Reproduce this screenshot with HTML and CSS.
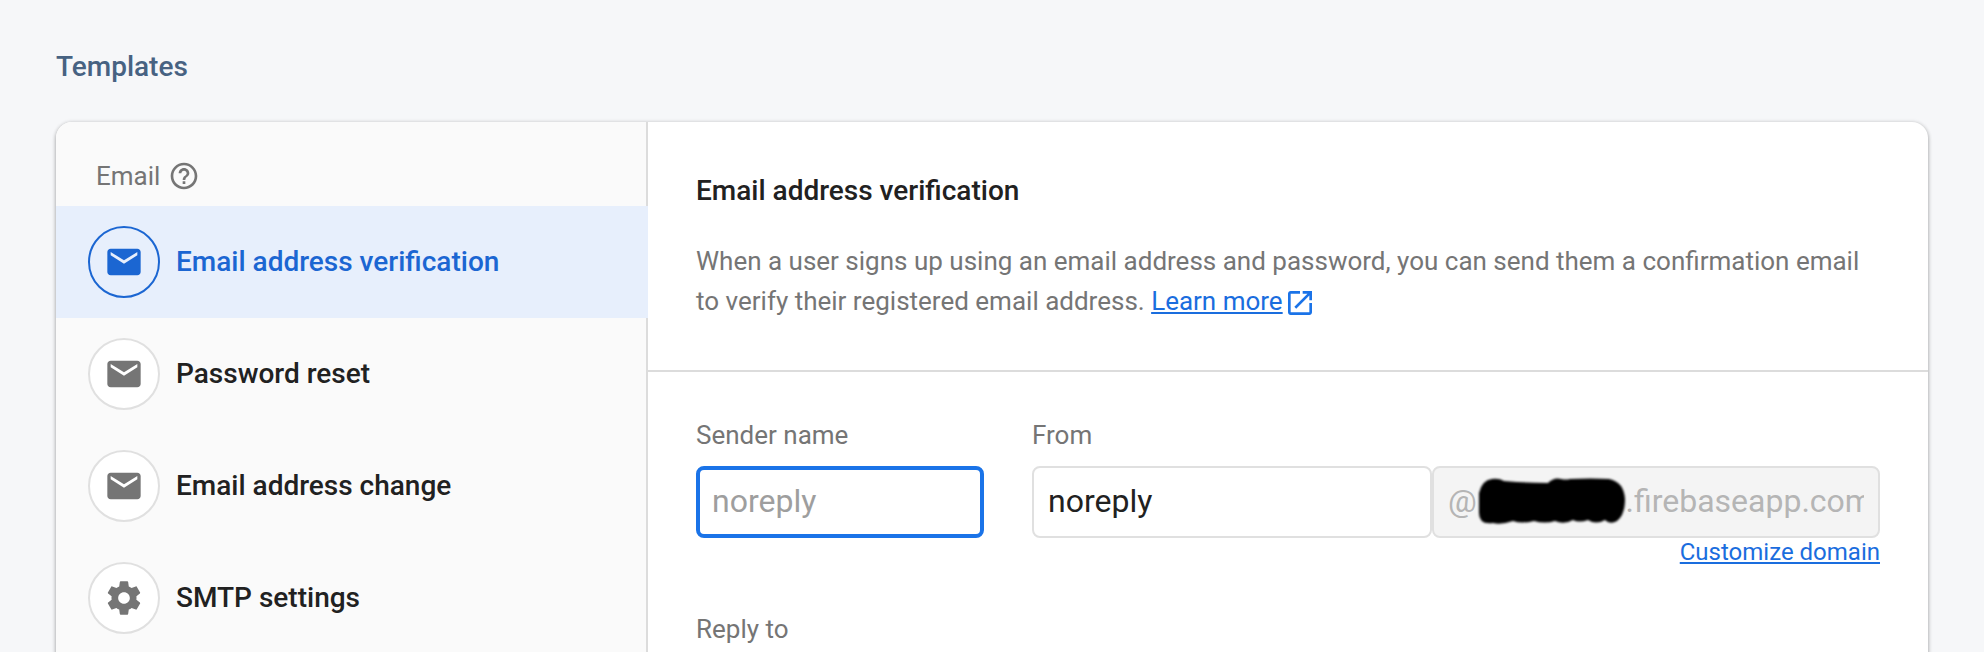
FILE: index.html
```html
<!DOCTYPE html>
<html lang="en">
<head>
<meta charset="utf-8">
<meta name="viewport" content="width=device-width, initial-scale=1">
<title>Templates</title>
<link rel="stylesheet" href="styles.css">
</head>
<body>
<svg class="sprite" aria-hidden="true">
  <symbol id="mail" viewBox="0 0 24 24"><path d="M20 4H4c-1.100 0-1.990.9-1.990 2L2 18c0 1.100.9 2 2 2h16c1.100 0 2-.9 2-2V6c0-1.100-.9-2-2-2zm0 4l-8 5-8-5V6l8 5 8-5v2z"/></symbol>
  <symbol id="gear" viewBox="0 0 24 24"><path d="M19.430 12.980c.04-.32.07-.64.07-.98s-.03-.66-.07-.98l2.110-1.650c.19-.15.24-.42.12-.64l-2-3.460c-.12-.22-.39-.3-.61-.22l-2.490 1c-.52-.4-1.080-.73-1.690-.98l-.38-2.650C14.460 2.180 14.250 2 14 2h-4c-.25 0-.46.18-.49.42l-.38 2.650c-.61.25-1.170.59-1.690.98l-2.490-1c-.23-.09-.49 0-.61.22l-2 3.460c-.13.22-.07.49.12.64l2.110 1.650c-.04.32-.07.65-.07.98s.03.66.07.98l-2.110 1.650c-.19.15-.24.42-.12.64l2 3.460c.12.22.39.3.61.22l2.490-1c.52.4 1.080.73 1.690.98l.38 2.650c.03.24.24.42.49.42h4c.25 0 .46-.18.49-.42l.38-2.650c.61-.25 1.170-.59 1.690-.98l2.490 1c.23.09.49 0 .61-.22l2-3.460c.12-.22.07-.49-.12-.64l-2.110-1.650zM12 15.500c-1.930 0-3.500-1.570-3.500-3.500s1.570-3.500 3.500-3.500 3.500 1.570 3.500 3.500-1.570 3.500-3.500 3.500z"/></symbol>
</svg>
<main class="page">
  <h1 class="page-title">Templates</h1>
  <div class="card">
    <nav class="sidebar" aria-label="Email templates">
      <div class="group">
        <span>Email</span>
        <button class="help" type="button" aria-label="Help">
          <svg class="icon-small" viewBox="0 0 24 24" aria-hidden="true"><path d="M11 18h2v-2h-2v2zm1-16C6.480 2 2 6.480 2 12s4.480 10 10 10 10-4.480 10-10S17.520 2 12 2zm0 18c-4.410 0-8-3.590-8-8s3.590-8 8-8 8 3.590 8 8-3.590 8-8 8zm0-14c-2.210 0-4 1.790-4 4h2c0-1.100.9-2 2-2s2 .9 2 2c0 2-3 1.750-3 5h2c0-2.250 3-2.500 3-5 0-2.210-1.790-4-4-4z"/></svg>
        </button>
      </div>
      <button class="item item-active" type="button" aria-current="true"><span class="badge"><svg class="icon" aria-hidden="true"><use href="#mail"/></svg></span>Email address verification</button>
      <button class="item" type="button"><span class="badge"><svg class="icon" aria-hidden="true"><use href="#mail"/></svg></span>Password reset</button>
      <button class="item" type="button"><span class="badge"><svg class="icon" aria-hidden="true"><use href="#mail"/></svg></span>Email address change</button>
      <button class="item" type="button"><span class="badge"><svg class="icon" aria-hidden="true"><use href="#gear"/></svg></span>SMTP settings</button>
    </nav>
    <section class="detail">
      <header class="intro">
        <h2 class="intro-title">Email address verification</h2>
        <p class="intro-text">When a user signs up using an email address and password, you can send them a confirmation email to verify their registered email address. <a class="link" href="#learn">Learn more</a><svg class="icon-small external" viewBox="0 0 24 24" aria-hidden="true"><path d="M19 19H5V5h7V3H5c-1.110 0-2 .9-2 2v14c0 1.100.89 2 2 2h14c1.100 0 2-.9 2-2v-7h-2v7zM14 3v2h3.590l-9.830 9.830 1.410 1.410L19 6.410V10h2V3h-7z"/></svg></p>
      </header>
      <form class="form">
        <div class="field">
          <label class="label" for="sender">Sender name</label>
          <input class="input input-focused" id="sender" type="text" placeholder="noreply">
        </div>
        <div class="field">
          <label class="label" for="from">From</label>
          <div class="address">
            <input class="input" id="from" type="text" value="noreply">
            <div class="domain">
              <input class="input" type="text" aria-label="Domain" disabled value="@&nbsp;&nbsp;&nbsp;&nbsp;&nbsp;&nbsp;&nbsp;&nbsp;&nbsp;&nbsp;&nbsp;&nbsp;&nbsp;&nbsp;&nbsp;&nbsp;&emsp13;&emsp13;.firebaseapp.com">
              <svg class="scribble" viewBox="0 0 152 52" aria-hidden="true"><path d="M4 18Q7 5 17 4Q24 3 29 6Q52 8 73 8Q79 2 86 4Q91 5 95 4Q116 3 134 4Q149 7 150 24Q150 40 142 46Q135 50 130 45Q121 50 113 45Q104 48 98 45Q89 50 80 46Q70 49 59 46Q47 49 38 46Q26 50 18 48Q4 50 4 38Z"/></svg>
            </div>
          </div>
          <a class="link customize" href="#domain">Customize domain</a>
        </div>
        <div class="field reply">
          <span class="label">Reply to</span>
        </div>
      </form>
    </section>
  </div>
</main>
</body>
</html>
```
FILE: styles.css
```css
* {
  box-sizing: border-box;
}

body {
  margin: 0;
  background: #f6f7f9;
  color: #212121;
  font-family: Roboto, "Liberation Sans", sans-serif;
  font-size: 26px;
  line-height: 40px;
}

button {
  padding: 0;
  border: 0;
  background: none;
  color: inherit;
  font: inherit;
  text-align: left;
}

svg {
  fill: currentColor;
}

.sprite {
  display: none;
}

.page {
  display: flex;
  flex-direction: column;
  height: 100vh;
  padding: 47px 56px 0;
  overflow: hidden;
}

.page-title {
  margin: 0 0 35px;
  color: #476282;
  font-size: 28px;
  font-weight: 500;
}

.card {
  display: flex;
  flex: 1 0 auto;
  border-radius: 16px 16px 0 0;
  background: #fff;
  box-shadow: 0 2px 4px rgba(0, 0, 0, 0.3), 0 0 4px rgba(0, 0, 0, 0.12);
}

.sidebar {
  display: flex;
  flex: 0 0 592px;
  flex-direction: column;
  border-radius: 16px 0 0 0;
  background: linear-gradient(to left, #dcdcdc 2px, #fafafa 2px);
}

.group {
  display: flex;
  align-items: center;
  gap: 8px;
  height: 84px;
  padding: 24px 40px 0;
  color: #757575;
}

.help {
  display: flex;
}

.icon-small {
  width: 32px;
  height: 32px;
}

.icon {
  width: 40px;
  height: 40px;
}

.item {
  display: flex;
  align-items: center;
  gap: 16px;
  height: 112px;
  padding: 0 32px;
  font-size: 28px;
  font-weight: 500;
}

.item-active {
  background: #e7effc;
  color: #1b66d2;
}

.badge {
  display: flex;
  align-items: center;
  justify-content: center;
  width: 72px;
  height: 72px;
  border: 2px solid #e0e0e0;
  border-radius: 50%;
  background: #fff;
  color: #757575;
}

.item-active .badge {
  border-color: currentColor;
  background: transparent;
  color: inherit;
}

.detail {
  flex: 1;
  min-width: 0;
}

.intro {
  padding: 49px 48px;
  border-bottom: 2px solid #dcdcdc;
}

.intro-title {
  margin: 0 0 30px;
  font-size: 28px;
  font-weight: 500;
}

.intro-text {
  margin: 0;
  color: #757575;
}

.link {
  color: #1a6dde;
  text-decoration: underline;
}

.external {
  margin-left: 1px;
  color: #1a73e8;
  vertical-align: -9px;
}

.form {
  display: grid;
  grid-template-columns: 18fr 53fr;
  gap: 43px 48px;
  padding: 43px 48px 0;
}

.field {
  display: flex;
  flex-direction: column;
  min-width: 0;
}

.label {
  padding-bottom: 11px;
  color: #757575;
}

.input {
  width: 100%;
  height: 72px;
  padding: 0 14px 2px;
  border: 2px solid #e0e0e0;
  border-radius: 8px;
  outline: none;
  background: #fff;
  color: #212121;
  font: 32px Roboto, "Liberation Sans", sans-serif;
}

.input::placeholder {
  color: #9e9e9e;
}

.input-focused {
  padding: 0 12px 2px;
  border: 4px solid #1a73e8;
}

.input:disabled {
  background: #f4f4f4;
  color: #b5b5b5;
}

.address {
  display: grid;
  grid-template-columns: 25fr 28fr;
}

.domain {
  position: relative;
}

.scribble {
  position: absolute;
  top: 9px;
  left: 43px;
  width: 152px;
  height: 52px;
  overflow: visible;
  fill: #000;
  filter: blur(1px);
}

.customize {
  align-self: flex-end;
  font-size: 24px;
  line-height: 28px;
}

.reply {
  grid-column: 1 / -1;
}
```
